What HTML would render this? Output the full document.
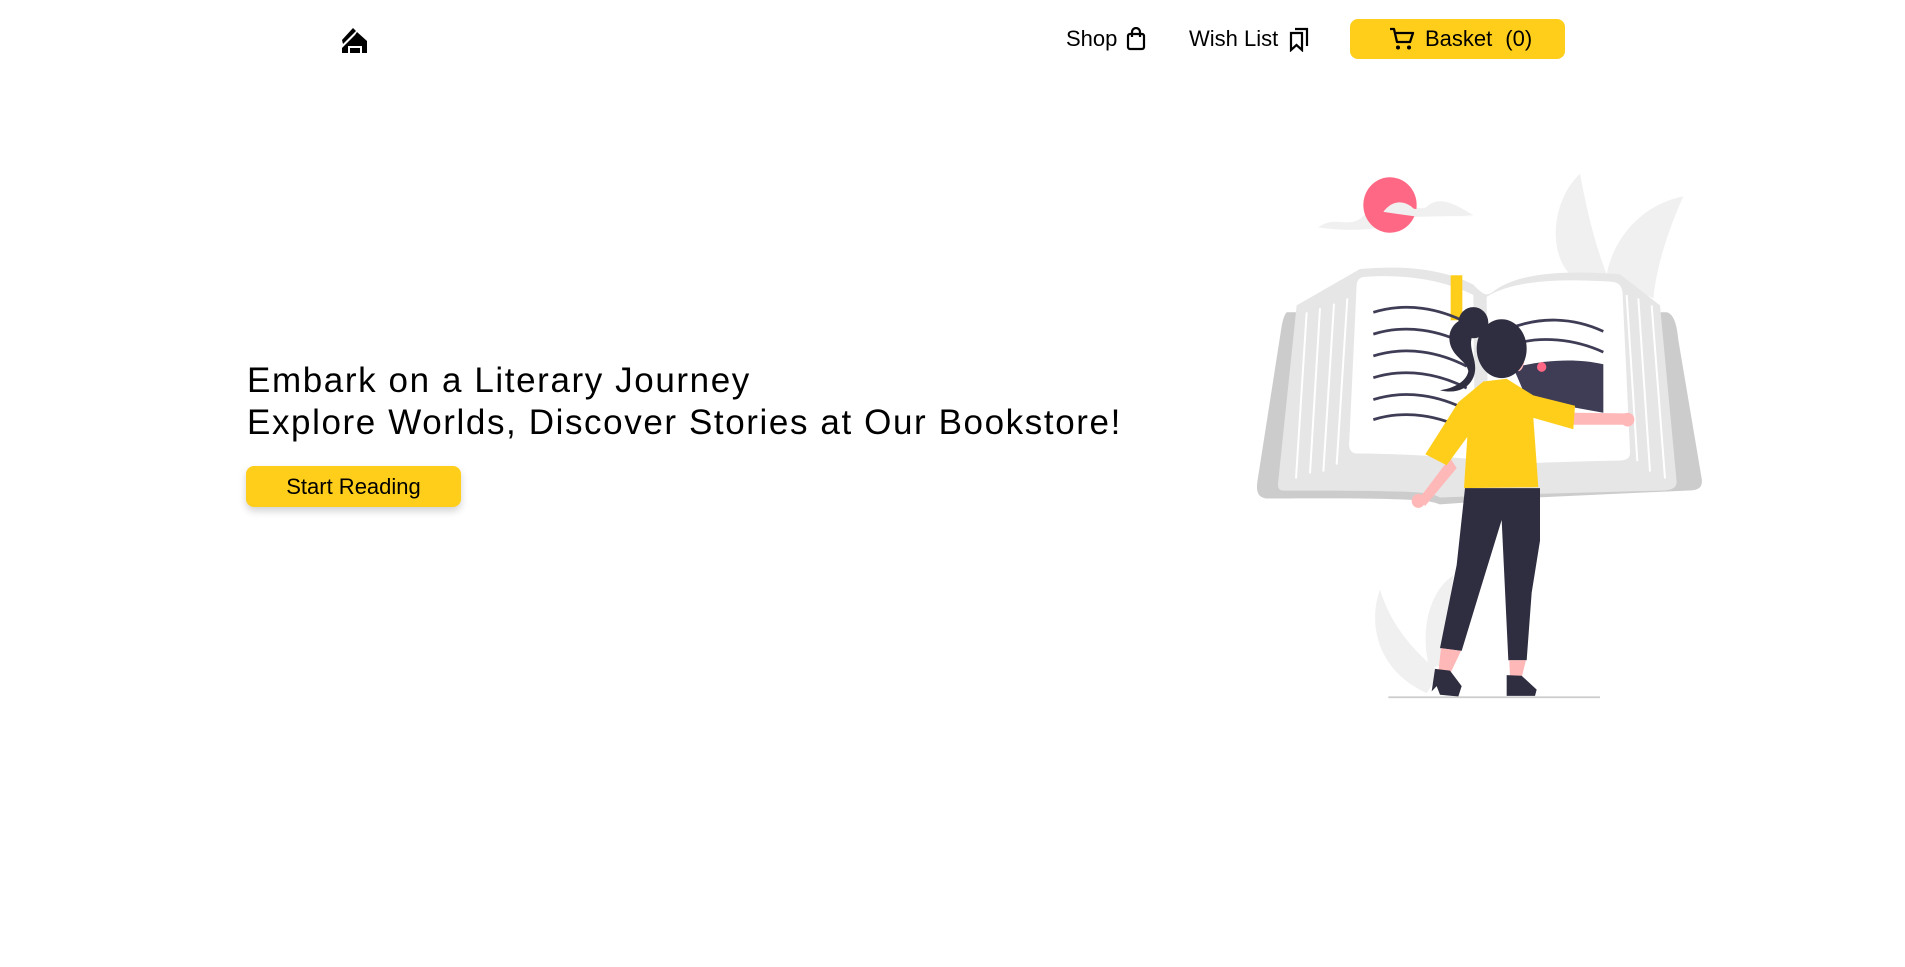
<!DOCTYPE html>
<html><head><meta charset="utf-8">
<style>
*{margin:0;padding:0;box-sizing:border-box}
body{width:1905px;height:967px;background:#fff;position:relative;overflow:hidden;font-family:"Liberation Sans",sans-serif;color:#000}
.nav{position:absolute;font-size:22px;top:25px;height:28px;line-height:28px;display:flex;align-items:center}
.btn{position:absolute;background:#ffce1b;border-radius:8px}
h1{position:absolute;left:247px;top:360px;font-weight:400;font-size:35px;line-height:42px;letter-spacing:1.6px;white-space:nowrap}
</style></head><body>
<svg style="position:absolute;left:340px;top:26px" width="29" height="28" viewBox="0 0 29 28">
<path d="M2 14 L13 2 L16 5 L3 18 Z" fill="#000"/>
<path d="M17 6 L27 15 V27 H22 V20 H8 V27 H2 V22 L15 9 Z" fill="#000"/>
<rect x="10" y="22" width="10" height="5" fill="#000"/>
</svg>

<div class="nav" style="left:1066px">Shop
<svg style="margin-left:9px" width="20" height="24" viewBox="0 0 20 24"><rect x="2" y="7" width="16" height="15" rx="2" fill="none" stroke="#000" stroke-width="2.2"/><path d="M6 10 V5 a4 4 0 0 1 8 0 V10" fill="none" stroke="#000" stroke-width="2.2"/></svg></div>
<div class="nav" style="left:1189px">Wish List
<svg style="margin-left:10px" width="22" height="26" viewBox="0 0 22 26"><path d="M3 7 H14 V24 L8.5 19 L3 24 Z" fill="none" stroke="#000" stroke-width="2.2"/><path d="M7 3 H19 V20" fill="none" stroke="#000" stroke-width="2.2"/></svg></div>

<div class="btn" style="left:1350px;top:19px;width:215px;height:40px"></div>
<div class="nav" style="left:1389px;top:25px">
<svg width="26" height="24" viewBox="0 0 26 24"><path d="M1 2 H5 L8 15 H21 L24 6 H7" fill="none" stroke="#000" stroke-width="2.3" stroke-linejoin="round"/><circle cx="9" cy="20.5" r="2" fill="#000"/><circle cx="20" cy="20.5" r="2" fill="#000"/></svg>
<span style="margin-left:10px">Basket</span><span style="margin-left:13px">(0)</span></div>

<h1>Embark on a Literary Journey<br>Explore Worlds, Discover Stories at Our Bookstore!</h1>
<div class="btn" style="left:246px;top:466px;width:215px;height:41px;box-shadow:0 4px 8px rgba(0,0,0,0.18);font-size:22px;line-height:41px;text-align:center">Start Reading</div>

<svg style="position:absolute;left:1240px;top:160px" width="480" height="540" viewBox="0 0 1440 1560" preserveAspectRatio="none">
<path d="M1020 40 C940 110 920 260 990 330 L1100 330 C1060 230 1040 140 1020 40Z" fill="#f0f0f0"/>
<path d="M1330 105 C1200 130 1120 230 1100 330 L1240 400 C1250 300 1290 190 1330 105Z" fill="#f0f0f0"/>
<path d="M420 1240 C380 1350 420 1480 560 1540 L600 1480 C520 1420 450 1340 420 1240Z" fill="#f0f0f0"/>
<path d="M640 1200 C560 1250 540 1380 570 1470 L630 1450 C620 1360 630 1280 640 1200Z" fill="#f0f0f0"/>
<path d="M235 195 C280 160 320 195 360 170 C400 130 430 160 470 130 C500 120 540 150 560 135 C600 100 650 130 700 160 L500 165 C460 200 350 210 235 195Z" fill="#f0f0f0"/>
<circle cx="450" cy="130" r="80" fill="#ff6884"/>
<path d="M430 150 C460 110 500 120 520 140 C560 150 650 160 700 162 L520 162 Z" fill="#f0f0f0"/>
<path d="M140 440 L1280 440 C1300 445 1310 470 1315 520 L1385 920 C1390 950 1370 955 1340 955 L890 975 L600 995 C570 985 560 975 80 978 C55 975 48 960 52 930 L125 480 C130 455 135 445 140 440Z" fill="#cccccc"/>
<path d="M360 315 C470 305 600 310 700 360 C730 390 740 395 760 380 C840 320 1000 320 1140 330 L1260 420 L1310 930 C1310 950 1290 955 1260 955 L880 965 L600 975 C570 960 560 955 130 955 C115 955 112 945 115 925 L170 420 Z" fill="#e6e6e6"/>
<path d="M370 338 C470 330 600 340 700 390 L705 865 C600 855 460 848 350 848 C330 848 325 830 328 810 L350 360 C352 345 360 340 370 338Z" fill="#fff"/>
<path d="M740 395 C830 340 1000 345 1120 352 C1140 355 1148 370 1148 390 L1170 840 C1172 860 1160 868 1140 868 C1030 870 880 875 745 880 Z" fill="#fff"/>
<g stroke="#fff" stroke-width="6">
<line x1="200" y1="440" x2="168" y2="920"/><line x1="240" y1="428" x2="210" y2="905"/><line x1="282" y1="415" x2="250" y2="900"/><line x1="322" y1="400" x2="290" y2="880"/>
<line x1="1160" y1="390" x2="1192" y2="870"/><line x1="1195" y1="400" x2="1230" y2="900"/><line x1="1235" y1="420" x2="1275" y2="920"/>
</g>
<rect x="632" y="333" width="35" height="130" fill="#ffce1b"/>
<g stroke="#3f3d56" stroke-width="8" fill="none">
<path d="M400 440 C500 410 600 430 680 470"/><path d="M400 503 C500 473 600 493 680 533"/><path d="M400 566 C500 536 600 556 680 596"/><path d="M400 629 C500 599 600 619 680 659"/><path d="M400 692 C500 662 600 682 680 722"/><path d="M400 750 C500 720 600 740 680 780"/>
<path d="M800 490 C900 450 1000 455 1090 495"/><path d="M830 530 C900 510 1000 515 1090 555"/>
</g>
<path d="M820 600 C900 580 1000 570 1090 590 L1090 730 L860 690 Z" fill="#3f3d56"/>
<circle cx="905" cy="598" r="14" fill="#ff6884"/>
<path d="M1000 730 L1160 732 L1165 765 L1000 765 Z" fill="#ffb8b8"/>
<circle cx="1163" cy="750" r="20" fill="#ffb8b8"/>
<path d="M630 860 L540 975 L555 1000 L650 890 Z" fill="#ffb8b8"/>
<circle cx="535" cy="985" r="20" fill="#ffb8b8"/>
<ellipse cx="835" cy="575" rx="18" ry="35" fill="#ffb8b8"/>
<path d="M730 640 L800 632 L880 680 L1005 710 L1000 778 L880 745 L895 945 L672 948 L682 800 L620 882 L556 850 L655 700 Z" fill="#ffce1b"/>
<path d="M675 948 L900 948 L900 1100 L875 1250 L860 1445 L805 1445 L785 1040 L718 1250 L665 1418 L600 1410 L650 1170 Z" fill="#2f2e41"/>
<path d="M603 1410 L663 1418 L630 1485 L595 1480 Z" fill="#ffb8b8"/>
<path d="M808 1445 L858 1445 L845 1495 L810 1495 Z" fill="#ffb8b8"/>
<path d="M585 1470 L630 1475 L665 1520 L655 1550 L600 1545 L590 1520 L575 1535 Z" fill="#2f2e41"/>
<path d="M800 1488 L845 1490 L890 1530 L885 1548 L800 1548 Z" fill="#2f2e41"/>
<ellipse cx="785" cy="545" rx="75" ry="85" fill="#2f2e41"/>
<path d="M700 460 C650 450 620 490 630 530 C640 570 680 580 685 610 C680 640 640 660 600 665 C660 680 700 650 705 610 C710 570 680 540 700 500 Z" fill="#2f2e41"/>
<circle cx="700" cy="470" r="45" fill="#2f2e41"/>
<line x1="445" y1="1552" x2="1080" y2="1552" stroke="#ccc" stroke-width="5"/>
</svg>
</body></html>
